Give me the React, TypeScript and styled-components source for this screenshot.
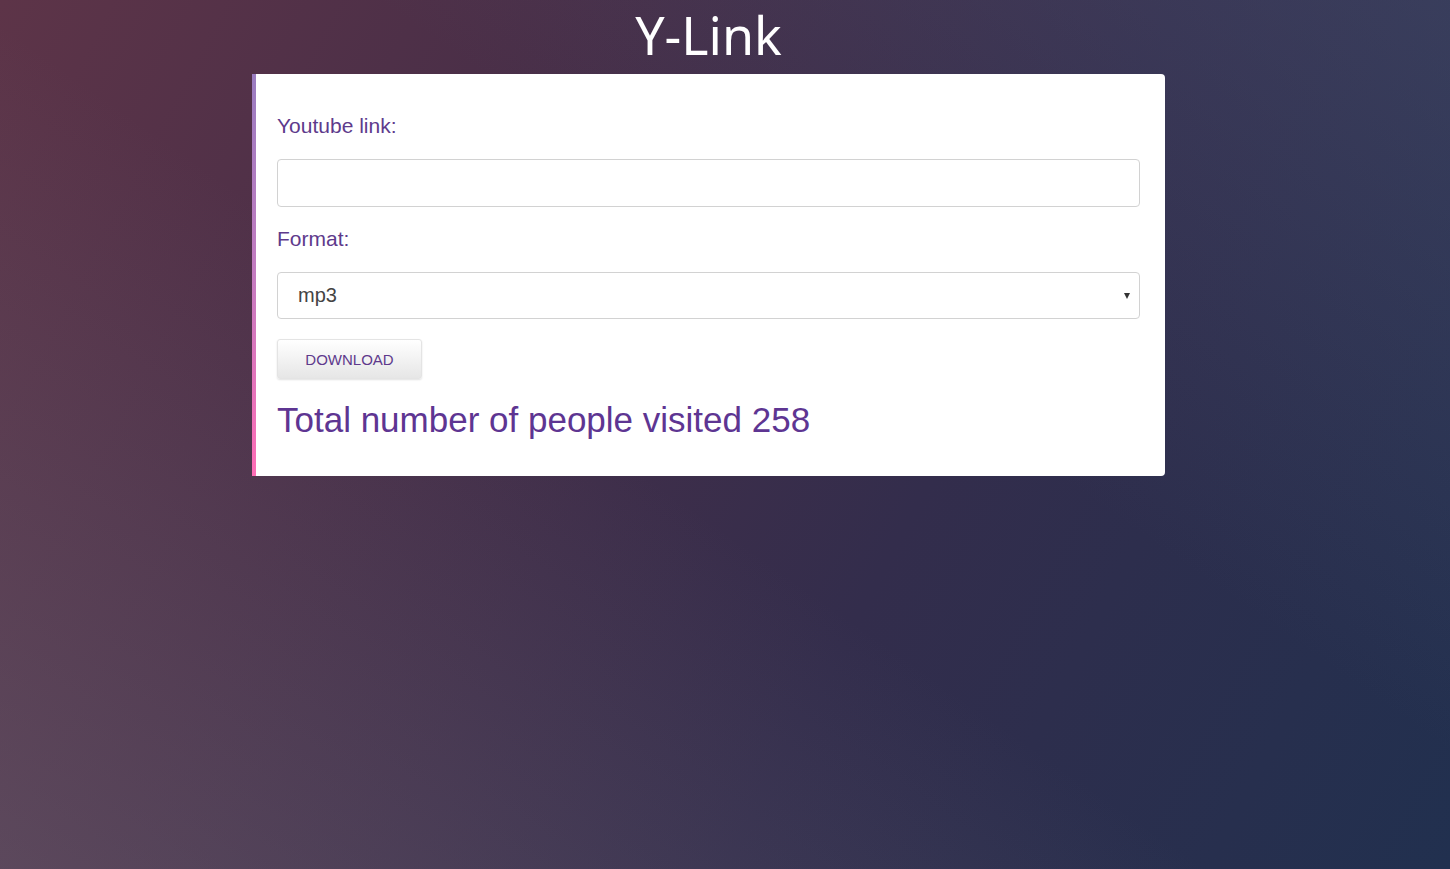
import { createGlobalStyle, styled } from "styled-components";

const GlobalStyle = createGlobalStyle`
  html, body {
    margin: 0;
    padding: 0;
    height: 100%;
  }
  body {
    font-family: "Liberation Sans", Arial, sans-serif;
    background: #3b3550;
  }
`;

const Page = styled.div`
  width: 100%;
  min-height: 869px;
  display: flex;
  flex-direction: column;
  align-items: center;
  background:
    linear-gradient(35deg, rgba(120, 118, 130, 0.35) 0%, rgba(120, 118, 130, 0) 45%),
    linear-gradient(215deg, rgba(80, 90, 120, 0.35) 0%, rgba(80, 90, 120, 0) 40%),
    linear-gradient(118deg, #5d3448 0%, #4a2f48 28%, #332d4c 62%, #21304f 100%);
`;

const Wrapper = styled.div`
  width: 913px;
  margin-left: -33px;
  display: flex;
  flex-direction: column;
`;

const Title = styled.h1`
  margin: 0;
  height: 74px;
  display: flex;
  align-items: center;
  justify-content: center;
  padding-bottom: 6px;
  box-sizing: border-box;
  font-family: "Noto Sans", "Open Sans", sans-serif;
  font-weight: 400;
  font-size: 52px;
  color: #ffffff;
`;

const Card = styled.div`
  position: relative;
  background: #ffffff;
  border-radius: 0 4px 4px 0;
  padding: 36px 25px 34px 25px;
  display: flex;
  flex-direction: column;

  &::before {
    content: "";
    position: absolute;
    left: 0;
    top: 0;
    bottom: 0;
    width: 4px;
    background: linear-gradient(180deg, #9a7cc0 0%, #c47bc0 50%, #ff6db6 100%);
  }
`;

const Label = styled.label`
  font-size: 21px;
  color: #5e3a8c;
  line-height: 32px;
  margin-bottom: 17px;
`;

const Field = styled.div<{ $gap: number; $height: number }>`
  position: relative;
  height: ${(p) => p.$height}px;
  box-sizing: border-box;
  border: 1px solid #d2d2d2;
  border-radius: 4px;
  background: #ffffff;
  margin-bottom: ${(p) => p.$gap}px;
`;

const TextInput = styled.input`
  width: 100%;
  height: 100%;
  box-sizing: border-box;
  border: none;
  outline: none;
  background: transparent;
  padding: 0 20px;
  font-family: "Liberation Sans", Arial, sans-serif;
  font-size: 20px;
`;

const Select = styled.select`
  width: 100%;
  height: 100%;
  box-sizing: border-box;
  border: none;
  outline: none;
  background: transparent;
  appearance: none;
  padding: 0 20px 2px 20px;
  font-family: "Liberation Sans", Arial, sans-serif;
  font-size: 20px;
  color: #444444;
`;

const Caret = styled.span`
  position: absolute;
  right: 9px;
  top: 50%;
  transform: translateY(-50%);
  width: 0;
  height: 0;
  border-left: 3.5px solid transparent;
  border-right: 3.5px solid transparent;
  border-top: 6px solid #333333;
  pointer-events: none;
`;

const Button = styled.button`
  align-self: flex-start;
  width: 145px;
  height: 40px;
  border: 1px solid #e4e4e4;
  border-radius: 3px;
  background: linear-gradient(180deg, #ffffff 0%, #e6e6e6 100%);
  box-shadow: 0 1px 2px rgba(0, 0, 0, 0.12);
  font-family: "Liberation Sans", Arial, sans-serif;
  font-size: 15px;
  color: #5e3a8c;
  text-transform: uppercase;
  cursor: pointer;
  margin-bottom: 19px;
`;

const Visits = styled.div`
  font-size: 35px;
  line-height: 44px;
  color: #5e3592;
`;

export default function App() {
  return (
    <>
      <GlobalStyle />
      <Page>
        <Wrapper>
          <Title>Y-Link</Title>
          <Card>
            <Label>Youtube link:</Label>
            <Field $gap={16} $height={48}>
              <TextInput type="text" />
            </Field>
            <Label>Format:</Label>
            <Field $gap={20} $height={47}>
              <Select defaultValue="mp3">
                <option value="mp3">mp3</option>
                <option value="mp4">mp4</option>
              </Select>
              <Caret />
            </Field>
            <Button>Download</Button>
            <Visits>Total number of people visited 258</Visits>
          </Card>
        </Wrapper>
      </Page>
    </>
  );
}
